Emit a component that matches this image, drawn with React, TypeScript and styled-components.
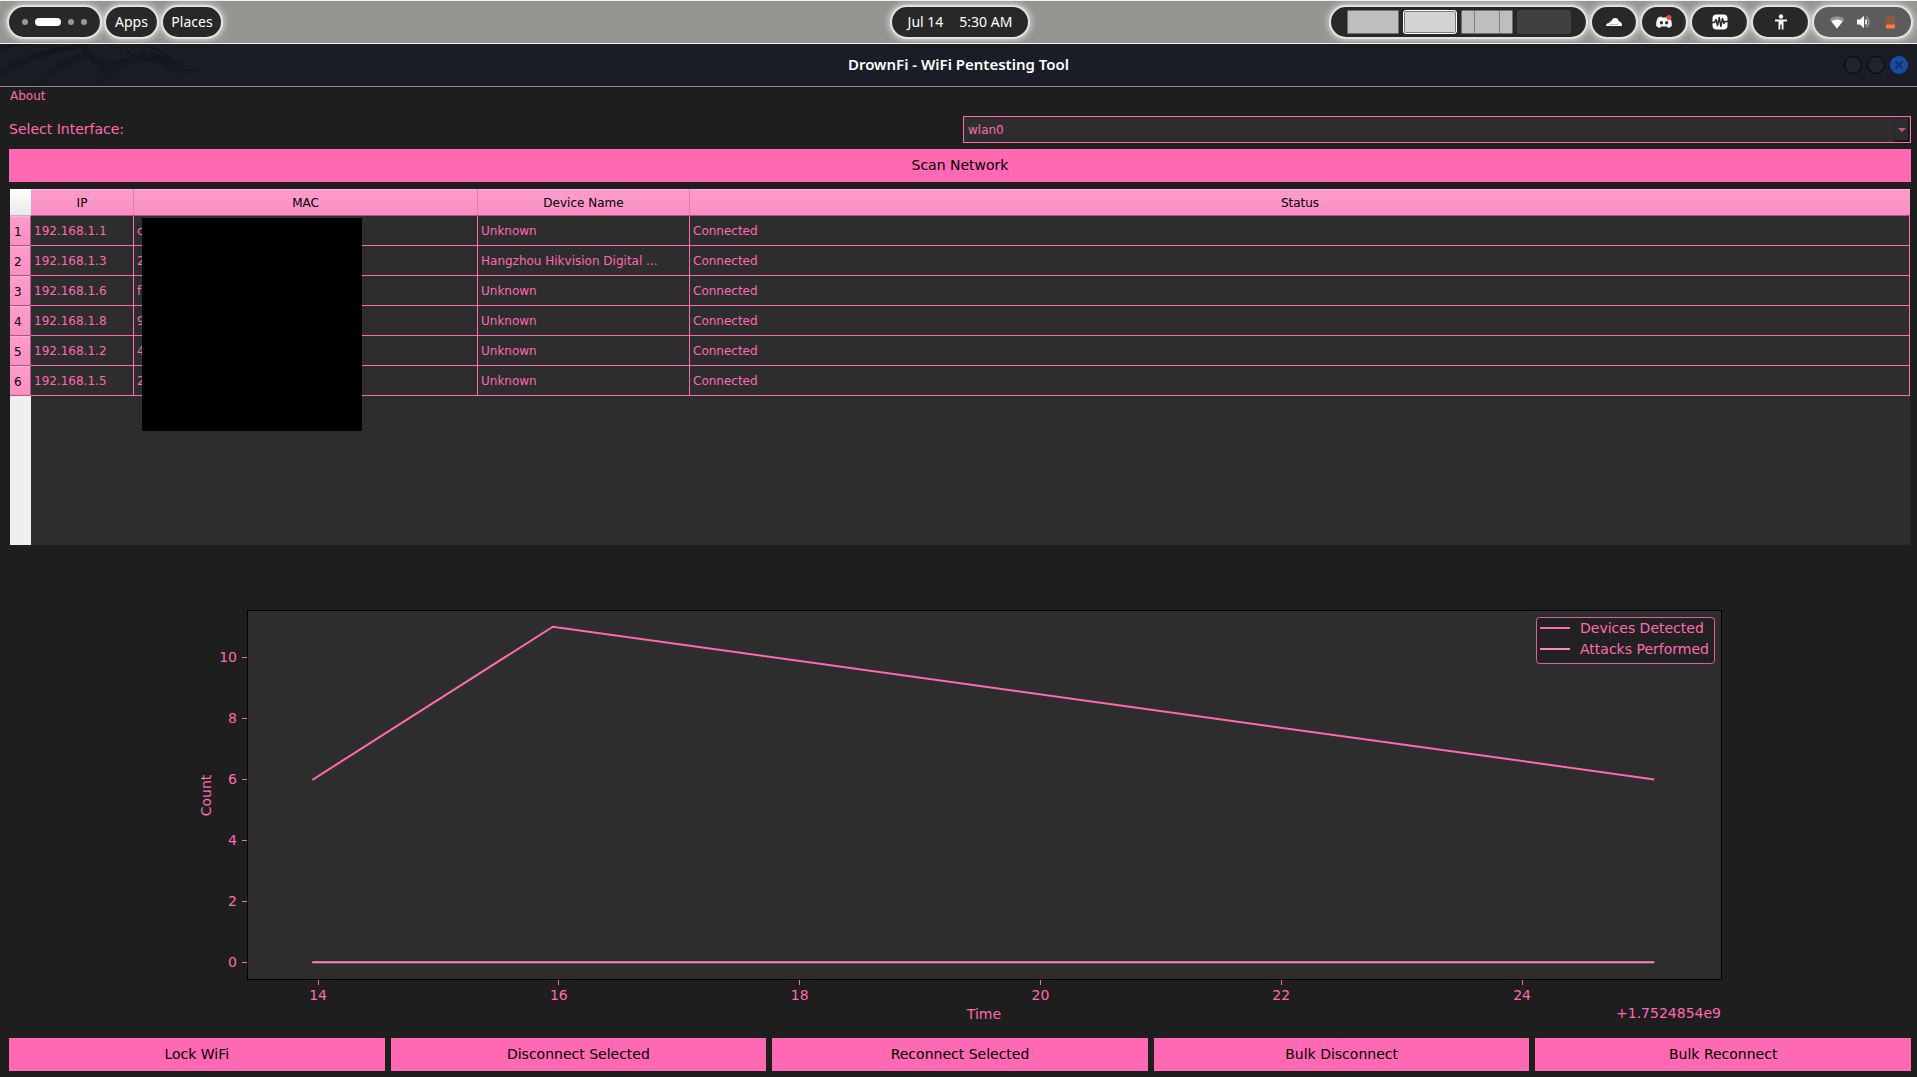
import React, { useLayoutEffect, useRef, useState } from "react";
import styled, { createGlobalStyle, css } from "styled-components";

const pink = "#ff69b4";
const softPink = "#ff85c2";
const surface = "#1e1e1e";
const panel = "#2d2d2d";
const appFont = '"DejaVu Sans", Verdana, sans-serif';
const shellFont = '"Noto Sans", "Open Sans", sans-serif';

const GlobalStyle = createGlobalStyle`
  *, *::before, *::after { box-sizing: border-box; }
  body { margin: 0; background: ${surface}; }
  button, select { font: inherit; color: inherit; }
`;

const Screen = styled.div`
  display: flex;
  flex-direction: column;
  min-height: 100vh;
  background: ${surface};
  color: ${pink};
  font-family: ${appFont};
`;

/* ---------- desktop panel ---------- */

const TopBar = styled.header`
  display: grid;
  grid-template-columns: 1fr auto 1fr;
  align-items: center;
  height: 44px;
  padding: 0 6px 0 9px;
  background: #959592;
  border: solid #f1f3f1;
  border-width: 1px 0;
  font-family: ${shellFont};
  font-size: 14px;
  color: #ffffff;
`;

const PillGroup = styled.div<{ $end?: boolean }>`
  display: flex;
  gap: 6px;
  justify-content: ${(p) => (p.$end ? "flex-end" : "flex-start")};
`;

const Pill = styled.button<{ $width: number; $light?: boolean; $gap?: number; $text?: boolean }>`
  display: flex;
  align-items: center;
  justify-content: center;
  gap: ${(p) => p.$gap ?? 0}px;
  width: ${(p) => p.$width}px;
  height: 30px;
  padding: ${(p) => (p.$text ? "0 0 2px" : "0")};
  border: 0;
  border-radius: 15px;
  background: ${(p) => (p.$light ? "#5c5c5c" : "#282828")};
  box-shadow: 0 0 0 2px #e2e2e2, 0 0 6px 3px rgba(255, 255, 255, 0.65);
  white-space: nowrap;
`;

const Dot = styled.span<{ $active?: boolean }>`
  width: ${(p) => (p.$active ? 26 : 6)}px;
  height: ${(p) => (p.$active ? 8 : 6)}px;
  border-radius: 4px;
  background: ${(p) => (p.$active ? "#ffffff" : "#989898")};
`;

const Thumb = styled.span<{ $kind: "idle" | "active" | "split" | "empty" }>`
  width: ${(p) => (p.$kind === "idle" || p.$kind === "split" ? 52 : 54)}px;
  height: 24px;
  border-radius: 3px;
  ${(p) =>
    p.$kind === "idle" &&
    css`
      background: #bebebe;
      border: 1px solid #6e6e6e;
      border-radius: 1px;
    `}
  ${(p) =>
    p.$kind === "active" &&
    css`
      background: #d3d3d3;
      border: 1px solid #ffffff;
      box-shadow: inset 0 0 0 1px #7a7a7a;
    `}
  ${(p) =>
    p.$kind === "split" &&
    css`
      border: 1px solid #6e6e6e;
      border-radius: 1px;
      background: linear-gradient(90deg, #bebebe 12px, #828282 12px 13px, #bebebe 13px 37px, #828282 37px 38px, #bebebe 38px);
    `}
  ${(p) =>
    p.$kind === "empty" &&
    css`
      background: #404040;
    `}
`;

/* ---------- window frame ---------- */

const TitleBar = styled.div`
  display: grid;
  grid-template-columns: 1fr auto 1fr;
  align-items: center;
  height: 43px;
  background: #1a1d26;
  border-bottom: 1px solid #8b8b8d;
  overflow: hidden;
`;

const Title = styled.h1`
  margin: 0;
  padding-bottom: 2px;
  font-family: ${shellFont};
  font-size: 15px;
  font-weight: 600;
  line-height: 20px;
  color: #ffffff;
`;

const WindowButtons = styled.div`
  display: flex;
  justify-content: flex-end;
  gap: 5px;
  padding-right: 9px;
`;

const WindowButton = styled.button<{ $close?: boolean }>`
  display: grid;
  place-items: center;
  width: 18px;
  height: 18px;
  padding: 0;
  border: 1px solid ${(p) => (p.$close ? "#1c50b4" : "#050608")};
  border-radius: 50%;
  background: ${(p) => (p.$close ? "#1b4aa2" : "#21242e")};
`;

/* ---------- application ---------- */

const MenuBar = styled.nav`
  display: flex;
  height: 23px;
  padding: 0 10px 5px;
  font-size: 12px;
  line-height: 18px;
`;

const MenuItem = styled.button`
  padding: 0;
  border: 0;
  background: none;
`;

const Body = styled.main`
  flex: 1;
  display: flex;
  flex-direction: column;
  gap: 6px;
  padding: 6px 6px 6px 9px;
`;

const InterfaceRow = styled.div`
  display: grid;
  grid-template-columns: 1fr 1fr;
  gap: 6px;
  align-items: center;
  font-size: 14px;
`;

const InterfaceLabel = styled.label`
  padding-bottom: 2px;
`;

const SelectBox = styled.div`
  display: flex;
  position: relative;
`;

const InterfaceSelect = styled.select`
  appearance: none;
  width: 100%;
  height: 27px;
  padding: 0 20px 0 4px;
  border: 1px solid ${pink};
  border-radius: 0;
  background: ${panel};
  font-size: 12px;
  color: ${pink};
`;

const SelectArrow = styled.span`
  position: absolute;
  top: 2px;
  right: 2px;
  bottom: 1px;
  width: 15px;
  display: grid;
  place-items: center;
  border: 1px solid #242424;
  border-width: 1px 1px 2px;
  border-right-color: #111111;
  border-bottom-color: #161616;
  pointer-events: none;
`;

const ActionButton = styled.button`
  height: 33px;
  padding: 0 0 2px;
  border: 0;
  background: ${pink};
  color: #000000;
  font-size: 14px;
`;

const TablePane = styled.section`
  position: relative;
  min-height: 358px;
  padding: 1px;
  background: linear-gradient(90deg, #efefef 21px, ${panel} 21px) content-box;
`;

const DeviceTable = styled.table`
  width: 100%;
  table-layout: fixed;
  border-collapse: separate;
  border-spacing: 0;
  font-size: 12px;
  line-height: 16px;
`;

const headerFill = css`
  background: linear-gradient(#ff9ccd, #f88fc3);
  box-shadow: inset 0 1px 0 #ffb3d9;
  color: #000000;
  font-weight: 400;
  border-bottom: 1px solid #b5527f;
`;

const Corner = styled.td`
  height: 27px;
  padding: 0;
  background: linear-gradient(#fefefe, #e9e9e9);
  border-bottom: 1px solid #b9b9b9;
`;

const ColumnHead = styled.th`
  ${headerFill}
  height: 27px;
  padding: 2px 0 0;
  text-align: center;
  &:not(:last-child) {
    border-right: 1px solid #d77fac;
  }
`;

const RowHead = styled.th`
  ${headerFill}
  height: 30px;
  padding: 2px 4px 0;
  text-align: left;
  border-right: 1px solid #b5527f;
`;

const Cell = styled.td`
  height: 30px;
  padding: 0 3px;
  border: solid ${pink};
  border-width: 0 1px 1px 0;
  white-space: nowrap;
  overflow: hidden;
`;

const Redaction = styled.div`
  position: absolute;
  top: 30px;
  left: 133px;
  width: 220px;
  height: 213px;
  background: #000000;
`;

const ChartSvg = styled.svg`
  display: block;
  flex: 1 1 0;
  width: 100%;
  min-height: 320px;
  font-size: 14px;
  fill: ${pink};
`;

const ActionRow = styled.div`
  display: grid;
  grid-template-columns: repeat(5, 1fr);
  gap: 6px;
`;

/* ---------- data ---------- */

const devices = [
  { ip: "192.168.1.1", mac: "c", name: "Unknown", status: "Connected" },
  { ip: "192.168.1.3", mac: "2", name: "Hangzhou Hikvision Digital ...", status: "Connected" },
  { ip: "192.168.1.6", mac: "f", name: "Unknown", status: "Connected" },
  { ip: "192.168.1.8", mac: "9", name: "Unknown", status: "Connected" },
  { ip: "192.168.1.2", mac: "4", name: "Unknown", status: "Connected" },
  { ip: "192.168.1.5", mac: "2", name: "Unknown", status: "Connected" },
];

const actions = ["Lock WiFi", "Disconnect Selected", "Reconnect Selected", "Bulk Disconnect", "Bulk Reconnect"];

const times = [13.96, 15.95, 25.09];
const detected = [6, 11, 6];
const attacks = [0, 0, 0];

/* ---------- chart ---------- */

function Chart() {
  const ref = useRef<SVGSVGElement>(null);
  const [size, setSize] = useState({ w: 1200, h: 480 });

  useLayoutEffect(() => {
    const el = ref.current;
    if (!el) return;
    const measure = () => {
      const box = el.getBoundingClientRect();
      setSize({ w: box.width, h: box.height });
    };
    measure();
    const observer = new ResizeObserver(measure);
    observer.observe(el);
    return () => observer.disconnect();
  }, []);

  const axisStart = size.w * 0.125;
  const axisWidth = size.w * 0.775;
  const left = Math.round(axisStart);
  const right = Math.round(axisStart + axisWidth);
  const top = Math.round(size.h * 0.12);
  const bottom = Math.round(size.h * 0.89);
  const w = right - left;
  const h = bottom - top;
  const x = (t: number) =>
    axisStart + axisWidth / 22 + ((t - times[0]) / (times[2] - times[0])) * (axisWidth / 1.1) - 0.5;
  const y = (v: number) => bottom - h / 22 - (v / 11) * (h / 1.1);
  const points = (values: number[]) => values.map((v, i) => `${x(times[i])},${y(v)}`).join(" ");
  const snap = (n: number) => Math.floor(n) + 0.5;

  return (
    <ChartSvg ref={ref} role="img" aria-label="Devices detected and attacks performed over time">
      <rect x={left + 0.5} y={top + 0.5} width={w} height={h} fill={panel} stroke="#000000" />
      {[0, 2, 4, 6, 8, 10].map((v) => (
        <g key={v}>
          <path d={`M${left - 5} ${snap(y(v))}h5`} stroke={pink} />
          <text x={left - 10} y={y(v) + 5} textAnchor="end">{v}</text>
        </g>
      ))}
      {[14, 16, 18, 20, 22, 24].map((t) => (
        <g key={t}>
          <path d={`M${snap(x(t))} ${bottom + 1}v5`} stroke={pink} />
          <text x={x(t)} y={bottom + 21} textAnchor="middle">{t}</text>
        </g>
      ))}
      <polyline points={points(detected)} fill="none" stroke={pink} strokeWidth="2" strokeLinecap="square" />
      <polyline points={points(attacks)} fill="none" stroke={softPink} strokeWidth="2" strokeLinecap="square" />
      <text x={left + w / 2} y={bottom + 40} textAnchor="middle">Time</text>
      <text x={right} y={bottom + 39} textAnchor="end">+1.7524854e9</text>
      <text transform={`translate(${left - 36} ${top + h / 2 + 1}) rotate(-90)`} textAnchor="middle">Count</text>
      <g transform={`translate(${right - 185} ${top + 7})`}>
        <rect x="0.5" y="0.5" width="178" height="46" rx="3" fill={surface} fillOpacity="0.8" stroke={pink} strokeOpacity="0.85" />
        <path d="M4 11h30" stroke={pink} strokeWidth="2" />
        <path d="M4 32h30" stroke={softPink} strokeWidth="2" />
        <text x="44" y="16">Devices Detected</text>
        <text x="44" y="37">Attacks Performed</text>
      </g>
    </ChartSvg>
  );
}

/* ---------- drawings ---------- */

const CloudIcon = () => (
  <svg width="18" height="12" viewBox="0 0 18 12" fill="#fff">
    <path d="M1 10C1 8 2.400 7 4.200 7C4.300 5.800 5.300 5.400 6.200 5.600C7 3.100 8.400 2 10.300 2C12.400 2 13.600 3.300 13.800 5.500C15.600 5.600 17 7 17 9.200L16.600 10Z" />
    <path d="M4 8.500h8.500l0.800-1.500" fill="none" stroke="#8a8a8a" strokeWidth="0.600" />
  </svg>
);

const DiscordIcon = () => (
  <svg width="18" height="18" viewBox="0 0 18 18">
    <path
      fill="#f4f4f4"
      d="M6.500 3.500C5 3.700 4 4 3 4.500C1.500 7 1 9.500 1.200 13C2.500 14.200 3.800 14.700 5 15L6 13.400H12L13 15C14.200 14.700 15.500 14.200 16.800 13C17 9.500 16.500 7 15 4.500C14 4 13 3.700 11.500 3.500L11 4.500H7Z"
    />
    <ellipse cx="6.400" cy="9.800" rx="1.500" ry="1.700" fill="#282828" />
    <ellipse cx="11.600" cy="9.800" rx="1.500" ry="1.700" fill="#282828" />
    <circle cx="14" cy="4.500" r="2.500" fill="#f04545" />
  </svg>
);

const MonitorIcon = () => (
  <svg width="16" height="16" viewBox="0 0 16 16">
    <rect x="0.500" y="0.500" width="15" height="15" rx="4" fill="#fff" />
    <path
      d="M0 8.500H2.500L4 5.500L5.500 11.500L7.300 3.500L8.800 12.500L10.500 4.500L12 9.500L13 7.500H16"
      fill="none"
      stroke="#282828"
      strokeWidth="1.500"
      strokeLinejoin="round"
    />
  </svg>
);

const AccessIcon = () => (
  <svg width="14" height="16" viewBox="0 0 14 16" fill="#f4f4f4">
    <circle cx="7" cy="2.500" r="2.200" />
    <path d="M1 5.500h12v2H9.500V15.500H7.700V10.500H6.300V15.500H4.500V7.500H1Z" />
  </svg>
);

const WifiIcon = () => (
  <svg width="16" height="14" viewBox="0 0 16 14">
    <path d="M8 13.500L0.500 4.200A11 11 0 0 1 15.500 4.200Z" fill="#949494" />
    <path d="M8 13.500L2.400 6.500A8.500 8.500 0 0 1 13.600 6.500Z" fill="#fff" />
  </svg>
);

const VolumeIcon = () => (
  <svg width="16" height="14" viewBox="0 0 16 14" fill="none">
    <path d="M0 4.500H3L7 0.800V13.200L3 9.500H0Z" fill="#fff" />
    <path d="M8.500 4.500Q10.200 7 8.500 9.500" stroke="#fff" strokeWidth="1.500" />
    <path d="M9.500 1.500Q14.500 7 9.500 12.500" stroke="#949494" strokeWidth="1.500" />
  </svg>
);

const BatteryIcon = () => (
  <svg width="12" height="14" viewBox="0 0 12 14">
    <path d="M1 2H3V0.500H9V2H10V13.500H1Z" fill="#8d5b42" />
    <path d="M1 9.500H10V13.500H1Z" fill="#ff7b3a" />
  </svg>
);

const Dragon = () => (
  <svg width="200" height="42" viewBox="0 0 200 42">
    <defs>
      <linearGradient id="dragonFade" x1="0" y1="0" x2="0" y2="42" gradientUnits="userSpaceOnUse">
        <stop offset="0" stopColor="#13151a" />
        <stop offset="1" stopColor="#181b22" />
      </linearGradient>
    </defs>
    <g fill="url(#dragonFade)">
      <path d="M0 3Q12 0 24 0H34Q14 2 0 6Z" />
      <path d="M0 26Q24 8 77 0L80 4Q52 9 33 17Q14 25 0 34Z" />
      <path d="M31 42Q50 19 82 8L87 13Q62 22 42 42Z" />
      <path d="M79 0H86Q91 13 107 18Q118 17 132 12Q126 10 127 5Q131 10 142 12Q138 9 139 5Q143 10 153 12Q149 9 150 5Q155 11 163 12L158 7Q148 3 134 0Q152 1 166 9L172 14L182 20L184 25Q190 26 198 24Q195 28 194 32Q188 29 181 29L168 28Q162 24 160 20Q142 15 126 22Q113 27 104 42H91Q99 31 99 24Q86 16 79 0Z" />
    </g>
  </svg>
);

export default function App() {
  return (
    <Screen>
      <GlobalStyle />
      <TopBar>
        <PillGroup>
          <Pill $width={91} $gap={7} aria-label="Workspaces">
            <Dot />
            <Dot $active />
            <Dot />
            <Dot />
          </Pill>
          <Pill $width={51} $text>Apps</Pill>
          <Pill $width={58} $text>Places</Pill>
        </PillGroup>
        <Pill $width={136} $gap={16} $text>
          <span>Jul 14</span>
          <span>5:30 AM</span>
        </Pill>
        <PillGroup $end>
          <Pill $width={255} $gap={4} aria-label="Workspace overview">
            <Thumb $kind="idle" />
            <Thumb $kind="active" />
            <Thumb $kind="split" />
            <Thumb $kind="empty" />
          </Pill>
          <Pill $width={44} aria-label="Cloudflare"><CloudIcon /></Pill>
          <Pill $width={44} aria-label="Discord"><DiscordIcon /></Pill>
          <Pill $width={55} aria-label="System monitor"><MonitorIcon /></Pill>
          <Pill $width={55} aria-label="Accessibility"><AccessIcon /></Pill>
          <Pill $width={97} $gap={12} $light aria-label="System status">
            <WifiIcon />
            <VolumeIcon />
            <BatteryIcon />
          </Pill>
        </PillGroup>
      </TopBar>

      <TitleBar>
        <Dragon />
        <Title>DrownFi - WiFi Pentesting Tool</Title>
        <WindowButtons>
          <WindowButton aria-label="Minimize" />
          <WindowButton aria-label="Maximize" />
          <WindowButton $close aria-label="Close">
            <svg width="10" height="10" viewBox="0 0 10 10">
              <path d="M1.500 1.500L8.500 8.500M8.500 1.500L1.500 8.500" stroke="#12306b" strokeWidth="2" />
            </svg>
          </WindowButton>
        </WindowButtons>
      </TitleBar>

      <MenuBar>
        <MenuItem>About</MenuItem>
      </MenuBar>

      <Body>
        <InterfaceRow>
          <InterfaceLabel htmlFor="iface">Select Interface:</InterfaceLabel>
          <SelectBox>
            <InterfaceSelect id="iface" defaultValue="wlan0">
              <option value="wlan0">wlan0</option>
            </InterfaceSelect>
            <SelectArrow>
              <svg width="8" height="4" viewBox="0 0 8 4">
                <path d="M0 0H8L4 4Z" fill="#c4568e" />
              </svg>
            </SelectArrow>
          </SelectBox>
        </InterfaceRow>

        <ActionButton>Scan Network</ActionButton>

        <TablePane>
          <DeviceTable>
            <colgroup>
              <col style={{ width: 21 }} />
              <col style={{ width: 103 }} />
              <col style={{ width: 344 }} />
              <col style={{ width: 212 }} />
              <col />
            </colgroup>
            <thead>
              <tr>
                <Corner />
                <ColumnHead scope="col">IP</ColumnHead>
                <ColumnHead scope="col">MAC</ColumnHead>
                <ColumnHead scope="col">Device Name</ColumnHead>
                <ColumnHead scope="col">Status</ColumnHead>
              </tr>
            </thead>
            <tbody>
              {devices.map((d, i) => (
                <tr key={d.ip}>
                  <RowHead scope="row">{i + 1}</RowHead>
                  <Cell>{d.ip}</Cell>
                  <Cell>{d.mac}</Cell>
                  <Cell>{d.name}</Cell>
                  <Cell>{d.status}</Cell>
                </tr>
              ))}
            </tbody>
          </DeviceTable>
          <Redaction />
        </TablePane>

        <Chart />

        <ActionRow>
          {actions.map((label) => (
            <ActionButton key={label}>{label}</ActionButton>
          ))}
        </ActionRow>
      </Body>
    </Screen>
  );
}
